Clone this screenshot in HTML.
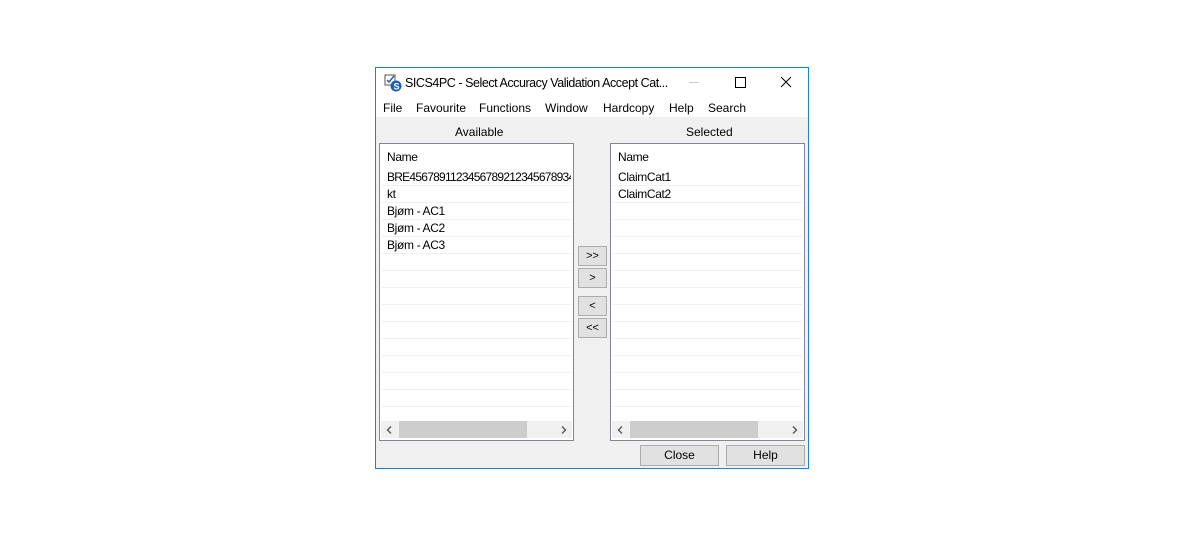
<!DOCTYPE html><html><head><style>
body{margin:0;width:1184px;height:536px;background:#fff;font-family:"Liberation Sans",sans-serif;font-size:12px;color:#000;position:relative;overflow:hidden}
.a{position:absolute}
.win{left:375px;top:67px;width:432px;height:400px;border:1px solid #1883d7;background:#f0f0f0}
.list{background:#fff;border:1px solid #828790;width:193px;height:296px;top:75px}
.row{position:absolute;left:2px;right:2px;height:16px;border-bottom:1px solid #f0f0f0;padding-left:5px;line-height:17px;letter-spacing:-0.35px;white-space:nowrap;overflow:hidden}
.btn{background:#e1e1e1;border:1px solid #adadad;text-align:center;box-sizing:border-box}
.sb{left:1px;right:1px;top:277px;height:17px;background:#f0f0f0}
.m{position:absolute;top:33px}
</style></head><body>
<div class="a win">
<div class="a" style="left:0;top:0;width:432px;height:49px;background:#fff"></div>
<svg class="a" style="left:8px;top:6px" width="18" height="18" viewBox="0 0 18 18"><rect x="1" y="1" width="10" height="10" fill="#fff" stroke="#555"/><path d="M3 6l2 2 5-6" stroke="#2a5ea8" stroke-width="1.5" fill="none"/><circle cx="12" cy="12" r="5.5" fill="#1d5fb5"/><text x="9.5" y="15.5" font-size="9" fill="#fff" font-weight="bold" font-family="Liberation Sans">S</text></svg>
<div class="a" style="left:29px;top:8px;font-size:12.5px;letter-spacing:-0.45px">SICS4PC - Select Accuracy Validation Accept Cat...</div>
<div class="a" style="left:313px;top:14px;width:10px;height:1px;background:#ccc"></div>
<div class="a" style="left:359px;top:9px;width:9px;height:9px;border:1px solid #000"></div>
<svg class="a" style="left:404px;top:8px" width="12" height="12"><path d="M1 1L11 11M11 1L1 11" stroke="#000" stroke-width="1"/></svg>
<div class="m" style="left:7px">File</div>
<div class="m" style="left:40px">Favourite</div>
<div class="m" style="left:103px">Functions</div>
<div class="m" style="left:169px">Window</div>
<div class="m" style="left:227px">Hardcopy</div>
<div class="m" style="left:293px">Help</div>
<div class="m" style="left:332px">Search</div>
<div class="a" style="left:79px;top:57px">Available</div>
<div class="a" style="left:310px;top:57px">Selected</div>
<div class="a list" style="left:3px">
<div class="row" style="top:5px;border:0">Name</div>
<div class="row" style="top:25px;letter-spacing:-0.75px">BRE4567891123456789212345678934</div>
<div class="row" style="top:42px">kt</div>
<div class="row" style="top:59px">Bjøm - AC1</div>
<div class="row" style="top:76px">Bjøm - AC2</div>
<div class="row" style="top:93px">Bjøm - AC3</div>
<div class="row" style="top:110px"></div><div class="row" style="top:127px"></div><div class="row" style="top:144px"></div><div class="row" style="top:161px"></div><div class="row" style="top:178px"></div><div class="row" style="top:195px"></div><div class="row" style="top:212px"></div><div class="row" style="top:229px"></div><div class="row" style="top:246px"></div><div class="row" style="top:263px;border:0;height:12px"></div>
<div class="a sb"><div class="a" style="left:18px;top:0;width:128px;height:17px;background:#cdcdcd"></div><svg class="a" style="left:5px;top:5px" width="6" height="8"><path d="M5 0.5L1.5 4L5 7.5" stroke="#606060" stroke-width="1.5" fill="none"/></svg><svg class="a" style="right:5px;top:5px" width="6" height="8"><path d="M1 0.5L4.5 4L1 7.5" stroke="#606060" stroke-width="1.5" fill="none"/></svg></div>
</div>
<div class="a list" style="left:234px">
<div class="row" style="top:5px;border:0">Name</div>
<div class="row" style="top:25px">ClaimCat1</div>
<div class="row" style="top:42px">ClaimCat2</div>
<div class="row" style="top:59px"></div><div class="row" style="top:76px"></div><div class="row" style="top:93px"></div>
<div class="row" style="top:110px"></div><div class="row" style="top:127px"></div><div class="row" style="top:144px"></div><div class="row" style="top:161px"></div><div class="row" style="top:178px"></div><div class="row" style="top:195px"></div><div class="row" style="top:212px"></div><div class="row" style="top:229px"></div><div class="row" style="top:246px"></div><div class="row" style="top:263px;border:0;height:12px"></div>
<div class="a sb"><div class="a" style="left:18px;top:0;width:128px;height:17px;background:#cdcdcd"></div><svg class="a" style="left:5px;top:5px" width="6" height="8"><path d="M5 0.5L1.5 4L5 7.5" stroke="#606060" stroke-width="1.5" fill="none"/></svg><svg class="a" style="right:5px;top:5px" width="6" height="8"><path d="M1 0.5L4.5 4L1 7.5" stroke="#606060" stroke-width="1.5" fill="none"/></svg></div>
</div>
<div class="a btn" style="left:202px;top:178px;width:29px;height:20px;line-height:18px;font-size:11px">&gt;&gt;</div>
<div class="a btn" style="left:202px;top:200px;width:29px;height:20px;line-height:18px;font-size:11px">&gt;</div>
<div class="a btn" style="left:202px;top:228px;width:29px;height:20px;line-height:18px;font-size:11px">&lt;</div>
<div class="a btn" style="left:202px;top:250px;width:29px;height:20px;line-height:18px;font-size:11px">&lt;&lt;</div>
<div class="a btn" style="left:264px;top:377px;width:79px;height:21px;line-height:19px">Close</div>
<div class="a btn" style="left:350px;top:377px;width:79px;height:21px;line-height:19px">Help</div>
</div>
</body></html>
